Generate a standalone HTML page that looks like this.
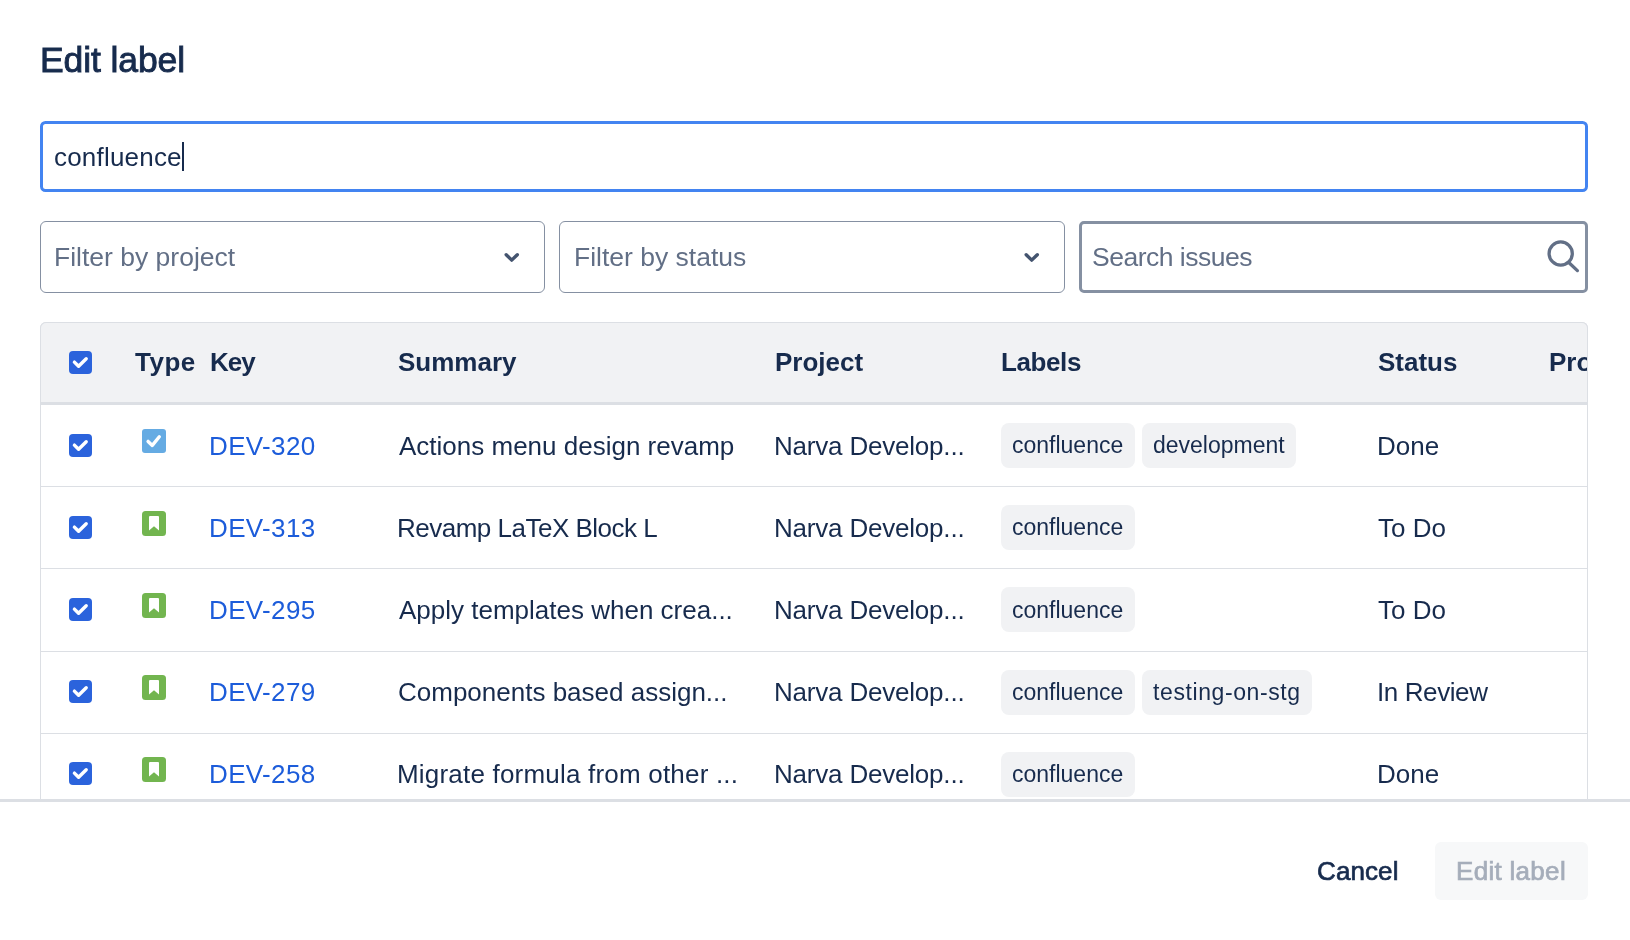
<!DOCTYPE html>
<html><head><meta charset="utf-8"><style>
html,body{margin:0;padding:0;background:#fff;width:1630px;height:940px;overflow:hidden;position:relative}
.t{position:absolute;white-space:nowrap;will-change:transform;line-height:40px;font-family:"Liberation Sans",sans-serif}
</style></head><body>
<div class="t" style="left:40px;top:39.69px;font-size:35.5px;font-weight:400;color:#172B4D;-webkit-text-stroke:0.9px #172B4D;letter-spacing:-0.1px">Edit label</div>
<div style="position:absolute;left:40px;top:121px;width:1548px;height:71px;box-sizing:border-box;border:3px solid #4384F1;border-radius:5.5px;"></div>
<div class="t" style="left:54px;top:136.99px;font-size:26px;font-weight:400;color:#172B4D;letter-spacing:0.2px">confluence</div>
<div style="position:absolute;left:182px;top:142px;width:2px;height:29px;box-sizing:border-box;background:#172B4D;"></div>
<div style="position:absolute;left:40px;top:221px;width:505px;height:72px;box-sizing:border-box;border:1.5px solid #8590A2;border-radius:6px;"></div>
<div class="t" style="left:54px;top:236.81px;font-size:26.5px;font-weight:400;color:#626F86;">Filter by project</div>
<div style="position:absolute;left:559px;top:221px;width:506px;height:72px;box-sizing:border-box;border:1.5px solid #8590A2;border-radius:6px;"></div>
<div class="t" style="left:574px;top:236.81px;font-size:26.5px;font-weight:400;color:#626F86;">Filter by status</div>
<svg style="position:absolute;left:499.7px;top:245px" width="24" height="24" viewBox="0 0 24 24"><path d="M6.2 9.7 L11.7 15.1 L17.3 9.7" fill="none" stroke="#44546F" stroke-width="3.4" stroke-linecap="round" stroke-linejoin="round"/></svg>
<svg style="position:absolute;left:1020px;top:245px" width="24" height="24" viewBox="0 0 24 24"><path d="M6.2 9.7 L11.7 15.1 L17.3 9.7" fill="none" stroke="#44546F" stroke-width="3.4" stroke-linecap="round" stroke-linejoin="round"/></svg>
<div style="position:absolute;left:1079px;top:221px;width:509px;height:72px;box-sizing:border-box;border:3px solid #8590A2;border-radius:5px;"></div>
<div class="t" style="left:1092px;top:236.81px;font-size:26.5px;font-weight:400;color:#626F86;letter-spacing:-0.5px">Search issues</div>
<svg style="position:absolute;left:1540px;top:233px" width="44" height="44" viewBox="0 0 44 44"><circle cx="20.7" cy="20.5" r="11.6" fill="none" stroke="#626F86" stroke-width="3.3"/><path d="M29.3 30 L37.4 37.6" stroke="#626F86" stroke-width="3.3" stroke-linecap="round"/></svg>
<div style="position:absolute;left:40px;top:322px;width:1548px;height:480px;box-sizing:border-box;border:1px solid #DCDFE4;border-bottom:none;border-radius:6px 6px 0 0;"></div>
<div style="position:absolute;left:40px;top:322px;width:1548px;height:83px;box-sizing:border-box;background:#F1F2F4;border:1px solid #DCDFE4;border-bottom:3px solid #DCDFE4;border-radius:6px 6px 0 0;"></div>
<svg style="position:absolute;left:69px;top:351px" width="23" height="23" viewBox="0 0 23 23"><rect x="0" y="0" width="23" height="23" rx="4" fill="#2B63DC"/><path d="M5.4 11.1 L9.6 15.3 L17.2 7.7" fill="none" stroke="#fff" stroke-width="3.4" stroke-linecap="round" stroke-linejoin="round"/></svg>
<div class="t" style="left:135px;top:341.99px;font-size:26px;font-weight:700;color:#172B4D;letter-spacing:0.5px">Type</div>
<div class="t" style="left:210px;top:341.99px;font-size:26px;font-weight:700;color:#172B4D;letter-spacing:-1px">Key</div>
<div class="t" style="left:398px;top:341.99px;font-size:26px;font-weight:700;color:#172B4D;">Summary</div>
<div class="t" style="left:775px;top:341.99px;font-size:26px;font-weight:700;color:#172B4D;">Project</div>
<div class="t" style="left:1001px;top:341.99px;font-size:26px;font-weight:700;color:#172B4D;letter-spacing:-0.4px">Labels</div>
<div class="t" style="left:1378px;top:341.99px;font-size:26px;font-weight:700;color:#172B4D;">Status</div>
<div style="position:absolute;left:1500px;top:330px;width:87px;height:70px;overflow:hidden"><div class="t" style="left:49px;top:11.99px;font-size:26px;font-weight:700;color:#172B4D">Project</div></div>
<svg style="position:absolute;left:69px;top:434px" width="23" height="23" viewBox="0 0 23 23"><rect x="0" y="0" width="23" height="23" rx="4" fill="#2B63DC"/><path d="M5.4 11.1 L9.6 15.3 L17.2 7.7" fill="none" stroke="#fff" stroke-width="3.4" stroke-linecap="round" stroke-linejoin="round"/></svg>
<svg style="position:absolute;left:142px;top:429px" width="24" height="24" viewBox="0 0 24 24"><rect width="24" height="24" rx="3" fill="#65ABE3"/><path d="M6.1 12.4 L10.3 16.4 L17.3 7.8" fill="none" stroke="#fff" stroke-width="3.4" stroke-linecap="round" stroke-linejoin="round"/></svg>
<div class="t" style="left:209px;top:425.99px;font-size:26px;font-weight:400;color:#1C5CDA;letter-spacing:0.35px">DEV-320</div>
<div class="t" style="left:399px;top:425.99px;font-size:26px;font-weight:400;color:#172B4D;letter-spacing:0px">Actions menu design revamp</div>
<div class="t" style="left:774px;top:425.99px;font-size:26px;font-weight:400;color:#172B4D;letter-spacing:-0.2px">Narva Develop...</div>
<div style="position:absolute;left:1001px;top:423px;width:134px;height:45px;box-sizing:border-box;background:#F1F2F4;border-radius:8px;"></div>
<div class="t" style="left:1012px;top:425.03px;font-size:23px;font-weight:400;color:#172B4D;">confluence</div>
<div style="position:absolute;left:1142px;top:423px;width:154px;height:45px;box-sizing:border-box;background:#F1F2F4;border-radius:8px;"></div>
<div class="t" style="left:1153px;top:425.03px;font-size:23px;font-weight:400;color:#172B4D;">development</div>
<div class="t" style="left:1377px;top:425.99px;font-size:26px;font-weight:400;color:#172B4D;letter-spacing:0px">Done</div>
<div style="position:absolute;left:41px;top:486px;width:1546px;height:1px;box-sizing:border-box;background:#DCDFE4;"></div>
<svg style="position:absolute;left:69px;top:516px" width="23" height="23" viewBox="0 0 23 23"><rect x="0" y="0" width="23" height="23" rx="4" fill="#2B63DC"/><path d="M5.4 11.1 L9.6 15.3 L17.2 7.7" fill="none" stroke="#fff" stroke-width="3.4" stroke-linecap="round" stroke-linejoin="round"/></svg>
<svg style="position:absolute;left:142px;top:511px" width="24" height="25" viewBox="0 0 24 25"><rect width="24" height="25" rx="3.5" fill="#72B54F"/><path d="M7 6 Q7 5 8 5 L16 5 Q17 5 17 6 L17 19.6 L12 15.3 L7 19.6 Z" fill="#fff"/></svg>
<div class="t" style="left:209px;top:507.99px;font-size:26px;font-weight:400;color:#1C5CDA;letter-spacing:0.35px">DEV-313</div>
<div class="t" style="left:397px;top:507.99px;font-size:26px;font-weight:400;color:#172B4D;letter-spacing:-0.5px">Revamp LaTeX Block L</div>
<div class="t" style="left:774px;top:507.99px;font-size:26px;font-weight:400;color:#172B4D;letter-spacing:-0.2px">Narva Develop...</div>
<div style="position:absolute;left:1001px;top:505px;width:134px;height:45px;box-sizing:border-box;background:#F1F2F4;border-radius:8px;"></div>
<div class="t" style="left:1012px;top:507.03px;font-size:23px;font-weight:400;color:#172B4D;">confluence</div>
<div class="t" style="left:1378px;top:507.99px;font-size:26px;font-weight:400;color:#172B4D;letter-spacing:0px">To Do</div>
<div style="position:absolute;left:41px;top:568px;width:1546px;height:1px;box-sizing:border-box;background:#DCDFE4;"></div>
<svg style="position:absolute;left:69px;top:598px" width="23" height="23" viewBox="0 0 23 23"><rect x="0" y="0" width="23" height="23" rx="4" fill="#2B63DC"/><path d="M5.4 11.1 L9.6 15.3 L17.2 7.7" fill="none" stroke="#fff" stroke-width="3.4" stroke-linecap="round" stroke-linejoin="round"/></svg>
<svg style="position:absolute;left:142px;top:593px" width="24" height="25" viewBox="0 0 24 25"><rect width="24" height="25" rx="3.5" fill="#72B54F"/><path d="M7 6 Q7 5 8 5 L16 5 Q17 5 17 6 L17 19.6 L12 15.3 L7 19.6 Z" fill="#fff"/></svg>
<div class="t" style="left:209px;top:589.99px;font-size:26px;font-weight:400;color:#1C5CDA;letter-spacing:0.35px">DEV-295</div>
<div class="t" style="left:399px;top:589.99px;font-size:26px;font-weight:400;color:#172B4D;letter-spacing:0px">Apply templates when crea...</div>
<div class="t" style="left:774px;top:589.99px;font-size:26px;font-weight:400;color:#172B4D;letter-spacing:-0.2px">Narva Develop...</div>
<div style="position:absolute;left:1001px;top:587px;width:134px;height:45px;box-sizing:border-box;background:#F1F2F4;border-radius:8px;"></div>
<div class="t" style="left:1012px;top:590.03px;font-size:23px;font-weight:400;color:#172B4D;">confluence</div>
<div class="t" style="left:1378px;top:589.99px;font-size:26px;font-weight:400;color:#172B4D;letter-spacing:0px">To Do</div>
<div style="position:absolute;left:41px;top:651px;width:1546px;height:1px;box-sizing:border-box;background:#DCDFE4;"></div>
<svg style="position:absolute;left:69px;top:680px" width="23" height="23" viewBox="0 0 23 23"><rect x="0" y="0" width="23" height="23" rx="4" fill="#2B63DC"/><path d="M5.4 11.1 L9.6 15.3 L17.2 7.7" fill="none" stroke="#fff" stroke-width="3.4" stroke-linecap="round" stroke-linejoin="round"/></svg>
<svg style="position:absolute;left:142px;top:675px" width="24" height="25" viewBox="0 0 24 25"><rect width="24" height="25" rx="3.5" fill="#72B54F"/><path d="M7 6 Q7 5 8 5 L16 5 Q17 5 17 6 L17 19.6 L12 15.3 L7 19.6 Z" fill="#fff"/></svg>
<div class="t" style="left:209px;top:671.99px;font-size:26px;font-weight:400;color:#1C5CDA;letter-spacing:0.35px">DEV-279</div>
<div class="t" style="left:398px;top:671.99px;font-size:26px;font-weight:400;color:#172B4D;letter-spacing:0px">Components based assign...</div>
<div class="t" style="left:774px;top:671.99px;font-size:26px;font-weight:400;color:#172B4D;letter-spacing:-0.2px">Narva Develop...</div>
<div style="position:absolute;left:1001px;top:670px;width:134px;height:45px;box-sizing:border-box;background:#F1F2F4;border-radius:8px;"></div>
<div class="t" style="left:1012px;top:672.03px;font-size:23px;font-weight:400;color:#172B4D;">confluence</div>
<div style="position:absolute;left:1142px;top:670px;width:170px;height:45px;box-sizing:border-box;background:#F1F2F4;border-radius:8px;"></div>
<div class="t" style="left:1153px;top:672.03px;font-size:23px;font-weight:400;color:#172B4D;letter-spacing:0.6px">testing-on-stg</div>
<div class="t" style="left:1377px;top:671.99px;font-size:26px;font-weight:400;color:#172B4D;letter-spacing:-0.4px">In Review</div>
<div style="position:absolute;left:41px;top:733px;width:1546px;height:1px;box-sizing:border-box;background:#DCDFE4;"></div>
<svg style="position:absolute;left:69px;top:762px" width="23" height="23" viewBox="0 0 23 23"><rect x="0" y="0" width="23" height="23" rx="4" fill="#2B63DC"/><path d="M5.4 11.1 L9.6 15.3 L17.2 7.7" fill="none" stroke="#fff" stroke-width="3.4" stroke-linecap="round" stroke-linejoin="round"/></svg>
<svg style="position:absolute;left:142px;top:757px" width="24" height="25" viewBox="0 0 24 25"><rect width="24" height="25" rx="3.5" fill="#72B54F"/><path d="M7 6 Q7 5 8 5 L16 5 Q17 5 17 6 L17 19.6 L12 15.3 L7 19.6 Z" fill="#fff"/></svg>
<div class="t" style="left:209px;top:753.99px;font-size:26px;font-weight:400;color:#1C5CDA;letter-spacing:0.35px">DEV-258</div>
<div class="t" style="left:397px;top:753.99px;font-size:26px;font-weight:400;color:#172B4D;letter-spacing:0.2px">Migrate formula from other ...</div>
<div class="t" style="left:774px;top:753.99px;font-size:26px;font-weight:400;color:#172B4D;letter-spacing:-0.2px">Narva Develop...</div>
<div style="position:absolute;left:1001px;top:752px;width:134px;height:45px;box-sizing:border-box;background:#F1F2F4;border-radius:8px;"></div>
<div class="t" style="left:1012px;top:754.03px;font-size:23px;font-weight:400;color:#172B4D;">confluence</div>
<div class="t" style="left:1377px;top:753.99px;font-size:26px;font-weight:400;color:#172B4D;letter-spacing:0px">Done</div>
<div style="position:absolute;left:0px;top:799px;width:1630px;height:3px;box-sizing:border-box;background:#DCDFE4;"></div>
<div style="position:absolute;left:0px;top:802px;width:1630px;height:138px;box-sizing:border-box;background:#fff;"></div>
<div class="t" style="left:1317px;top:850.99px;font-size:26px;font-weight:400;color:#172B4D;-webkit-text-stroke:0.7px #172B4D;letter-spacing:0.1px">Cancel</div>
<div style="position:absolute;left:1435px;top:842px;width:153px;height:58px;box-sizing:border-box;background:#F7F8F9;border-radius:6px;"></div>
<div class="t" style="left:1456px;top:850.99px;font-size:26px;font-weight:400;color:#A5ADBA;-webkit-text-stroke:0.7px #A5ADBA;letter-spacing:0.3px">Edit label</div>
</body></html>
